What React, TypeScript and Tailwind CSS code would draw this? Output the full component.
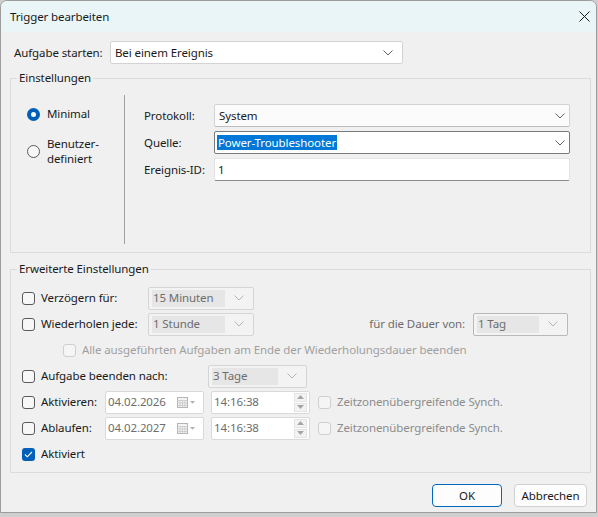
import React from "react";

function Chevron({ c = "#5f5f5f" }: { c?: string }) {
  return (
    <svg width="10" height="6" viewBox="0 0 10 6">
      <path d="M0.5 0.5 L5 5 L9.5 0.5" fill="none" stroke={c} strokeWidth="1" />
    </svg>
  );
}

function Check({ state = "on" }: { state?: "on" | "off" | "checked" }) {
  if (state === "checked") {
    return (
      <div className="w-[13px] h-[13px] rounded-[3px] bg-[#005fb8] flex items-center justify-center shrink-0">
        <svg width="9" height="7" viewBox="0 0 9 7">
          <path d="M1 3.5 L3.3 5.8 L8 1" fill="none" stroke="#ffffff" strokeWidth="1.1" />
        </svg>
      </div>
    );
  }
  return (
    <div
      className={
        state === "on"
          ? "w-[13px] h-[13px] rounded-[3px] border border-[#5a5a5a] bg-[#f7f7f7] shrink-0"
          : "w-[13px] h-[13px] rounded-[3px] border border-[#cfcfcf] bg-[#f5f5f5] shrink-0"
      }
    />
  );
}

function DisabledCombo({ w, text, dark = false }: { w: string; text: string; dark?: boolean }) {
  return (
    <div
      className={`${w} h-[23px] border ${dark ? "border-[#b9b9b9]" : "border-[#d5d5d5]"} bg-[#f3f3f3] rounded-[2px] flex items-center pl-[3px] pr-[9px] shrink-0`}
    >
      <div className="flex-1 h-[17px] bg-[#e6e6e6] flex items-center pl-[1px] text-[#6d6d6d]">{text}</div>
      <div className="ml-[9px]">
        <Chevron c="#b4b4b4" />
      </div>
    </div>
  );
}

function DateField({ text }: { text: string }) {
  return (
    <div className="w-[99px] h-[23px] border border-[#d9d9d9] bg-white rounded-[2px] flex items-center pl-[2px] pr-[7px] shrink-0">
      <span className="flex-1 text-[#6d6d6d]">{text}</span>
      <svg width="19" height="11" viewBox="0 0 19 11">
        <rect x="0.5" y="0.5" width="10" height="10" fill="#f4f4f4" stroke="#b5b5b5" />
        <path d="M0.5 3.5 H10.5 M0.5 6 H10.5 M0.5 8.5 H10.5 M3 3.5 V10.5 M5.5 3.5 V10.5 M8 3.5 V10.5" stroke="#c8c8c8" strokeWidth="0.8" />
        <path d="M13 4 L18 4 L15.5 6.8 Z" fill="#b0b0b0" />
      </svg>
    </div>
  );
}

function TimeField({ text }: { text: string }) {
  return (
    <div className="w-[99px] h-[23px] border border-[#d9d9d9] bg-white rounded-[2px] flex items-center pl-[2px] pr-[2px] shrink-0">
      <span className="flex-1 text-[#6d6d6d]">{text}</span>
      <div className="flex flex-col gap-[1px]">
        <div className="w-[13px] h-[9px] bg-[#f3f3f3] border border-[#e3e3e3] flex items-center justify-center">
          <svg width="7" height="4" viewBox="0 0 7 4">
            <path d="M0 4 L3.5 0 L7 4 Z" fill="#a6a6a6" />
          </svg>
        </div>
        <div className="w-[13px] h-[9px] bg-[#f3f3f3] border border-[#e3e3e3] flex items-center justify-center">
          <svg width="7" height="4" viewBox="0 0 7 4">
            <path d="M0 0 L3.5 4 L7 0 Z" fill="#a6a6a6" />
          </svg>
        </div>
      </div>
    </div>
  );
}

export default function App() {
  return (
    <div className="w-[598px] h-[517px] bg-[#cfcfcf] font-['Noto_Sans',sans-serif] text-[11.5px] tracking-[-0.1px] leading-[16px] text-[#1a1a1a] overflow-hidden">
      <div className="w-[597px] h-[513px] border border-[#9c9c9c] rounded-t-[7px] overflow-hidden flex flex-col bg-[#f0f0f0]">
        {/* title bar */}
        <div className="h-[31px] bg-[#e9f5f7] flex items-center justify-between pl-[9px] pr-[6px] shrink-0">
          <span className="text-[#1a1a1a]">Trigger bearbeiten</span>
          <svg width="11" height="11" viewBox="0 0 11 11">
            <path d="M0.5 0.5 L10.5 10.5 M10.5 0.5 L0.5 10.5" stroke="#1a1a1a" strokeWidth="1" />
          </svg>
        </div>

        <div className="pl-[9px] w-[590px]">
          {/* Aufgabe starten */}
          <div className="mt-[9px] h-[23px] flex items-center">
            <span className="ml-[4px] w-[96px]">Aufgabe starten:</span>
            <div className="w-[293px] h-[23px] bg-white border border-[#d3d3d3] rounded-[2px] flex items-center pl-[4px] pr-[9px]">
              <span className="flex-1">Bei einem Ereignis</span>
              <Chevron />
            </div>
          </div>

          {/* Einstellungen */}
          <fieldset className="mt-[6px] border border-[#dcdcdc] w-[581px] h-[183px]">
            <legend className="ml-[6px] px-[2px]">Einstellungen</legend>
            <div className="flex h-[165px]">
              <div className="w-[113px] flex flex-col">
                <div className="mt-[20px] ml-[16px] flex items-center h-[16px]">
                  <div className="w-[13px] h-[13px] rounded-full bg-[#005fb8] flex items-center justify-center">
                    <div className="w-[5px] h-[5px] rounded-full bg-white" />
                  </div>
                  <span className="ml-[7px]">Minimal</span>
                </div>
                <div className="mt-[14px] ml-[16px] flex items-center">
                  <div className="w-[13px] h-[13px] rounded-full border border-[#5a5a5a] bg-[#f7f7f7] shrink-0" />
                  <span className="ml-[7px] leading-[15px]">
                    Benutzer-
                    <br />
                    definiert
                  </span>
                </div>
              </div>
              <div className="w-[1px] bg-[#a0a0a0] mt-[9px] mb-[7px]" />
              <div className="flex flex-col pt-[18px] gap-[4px]">
                <div className="flex items-center h-[23px]">
                  <span className="ml-[19px] w-[70px]">Protokoll:</span>
                  <div className="w-[356px] h-[23px] bg-[#fbfbfb] border border-[#d3d3d3] border-b-[#bdbdbd] rounded-[2px] flex items-center pl-[4px] pr-[4px]">
                    <span className="flex-1">System</span>
                    <Chevron />
                  </div>
                </div>
                <div className="flex items-center h-[23px]">
                  <span className="ml-[19px] w-[70px]">Quelle:</span>
                  <div className="w-[356px] h-[23px] bg-white border border-[#7a7a7a] rounded-[2px] flex items-center pl-[2px] pr-[4px]">
                    <span className="flex-1">
                      <span className="bg-[#0078d7] text-white px-[1px]">Power-Troubleshooter</span>
                    </span>
                    <Chevron />
                  </div>
                </div>
                <div className="flex items-center h-[23px]">
                  <span className="ml-[19px] w-[70px]">Ereignis-ID:</span>
                  <div className="w-[356px] h-[23px] bg-white border border-[#e3e3e3] border-b-[#8a8a8a] rounded-[2px] flex items-center pl-[3px]">
                    <span>1</span>
                  </div>
                </div>
              </div>
            </div>
          </fieldset>

          {/* Erweiterte Einstellungen */}
          <fieldset className="mt-[8px] border border-[#dcdcdc] w-[581px] h-[212px]">
            <legend className="ml-[6px] px-[2px]">Erweiterte Einstellungen</legend>
            <div className="pt-[8px] flex flex-col">
              <div className="flex items-center h-[26px]">
                <div className="ml-[11px]"><Check /></div>
                <span className="ml-[6px] w-[107px]">Verzögern für:</span>
                <DisabledCombo w="w-[106px]" text="15 Minuten" />
              </div>
              <div className="flex items-center h-[26px]">
                <div className="ml-[11px]"><Check /></div>
                <span className="ml-[6px] w-[107px]">Wiederholen jede:</span>
                <DisabledCombo w="w-[106px]" text="1 Stunde" />
                <span className="w-[211px] text-right text-[#6d6d6d]">für die Dauer von:</span>
                <div className="ml-[8px]">
                  <DisabledCombo w="w-[95px]" text="1 Tag" dark />
                </div>
              </div>
              <div className="flex items-center h-[26px]">
                <div className="ml-[52px]"><Check state="off" /></div>
                <span className="ml-[6px] text-[#a0a0a0]">Alle ausgeführten Aufgaben am Ende der Wiederholungsdauer beenden</span>
              </div>
              <div className="flex items-center h-[26px]">
                <div className="ml-[11px]"><Check /></div>
                <span className="ml-[6px] w-[167px]">Aufgabe beenden nach:</span>
                <DisabledCombo w="w-[99px]" text="3 Tage" />
              </div>
              <div className="flex items-center h-[26px]">
                <div className="ml-[11px]"><Check /></div>
                <span className="ml-[6px] w-[64px]">Aktivieren:</span>
                <DateField text="04.02.2026" />
                <div className="ml-[7px]"><TimeField text="14:16:38" /></div>
                <div className="ml-[8px]"><Check state="off" /></div>
                <span className="ml-[6px] text-[#8c8c8c]">Zeitzonenübergreifende Synch.</span>
              </div>
              <div className="flex items-center h-[26px]">
                <div className="ml-[11px]"><Check /></div>
                <span className="ml-[6px] w-[64px]">Ablaufen:</span>
                <DateField text="04.02.2027" />
                <div className="ml-[7px]"><TimeField text="14:16:38" /></div>
                <div className="ml-[8px]"><Check state="off" /></div>
                <span className="ml-[6px] text-[#8c8c8c]">Zeitzonenübergreifende Synch.</span>
              </div>
              <div className="flex items-center h-[26px]">
                <div className="ml-[11px]"><Check state="checked" /></div>
                <span className="ml-[6px]">Aktiviert</span>
              </div>
            </div>
          </fieldset>

          {/* buttons */}
          <div className="mt-[11px] flex justify-end gap-[12px] pr-[4px]">
            <button className="w-[70px] h-[23px] bg-[#fdfdfd] border border-[#0067c0] rounded-[4px] text-[#1a1a1a]">OK</button>
            <button className="w-[73px] h-[23px] bg-[#fdfdfd] border border-[#d0d0d0] rounded-[4px] text-[#1a1a1a]">Abbrechen</button>
          </div>
        </div>
      </div>
    </div>
  );
}
